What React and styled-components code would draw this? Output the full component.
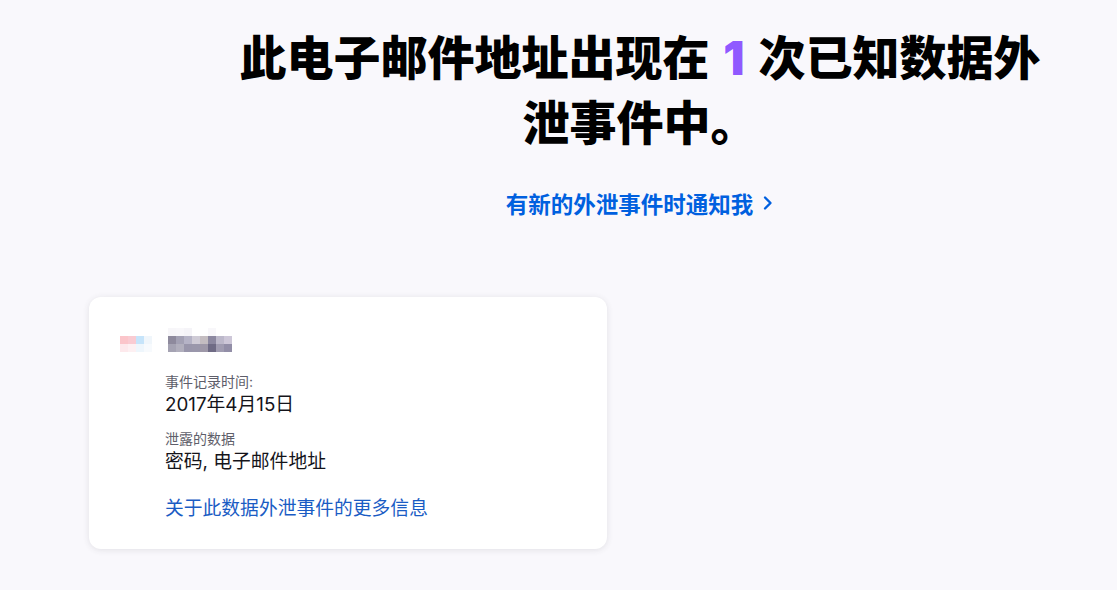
import React from 'react';
import styled, { createGlobalStyle } from 'styled-components';

const GlobalStyle = createGlobalStyle`
  html, body {
    margin: 0;
    padding: 0;
    background: #f9f8fc;
  }
  body {
    font-family: Inter, "Noto Sans CJK SC", "Noto Sans", sans-serif;
    color: #15141a;
  }
  * {
    box-sizing: border-box;
  }
`;

const Page = styled.main`
  min-height: 590px;
  padding: 24px 0 0 89px;
`;

const Hero = styled.section`
  width: 820px;
  margin-left: 141px;
  text-align: center;
`;

const Title = styled.h1`
  margin: 0;
  font-family: "Noto Sans CJK SC", sans-serif;
  font-size: 47px;
  font-weight: 900;
  line-height: 62px;
  color: #000;
`;

const Count = styled.span`
  color: #9059ff;
  margin: 0 3px;
  font-family: Inter, "Noto Sans CJK SC", sans-serif;
`;

const NotifyLink = styled.a`
  display: inline-flex;
  align-items: center;
  gap: 9px;
  margin-top: 37px;
  font-family: "Noto Sans CJK SC", sans-serif;
  font-size: 22.5px;
  font-weight: 700;
  line-height: 30px;
  color: #0060df;
  text-decoration: none;
  cursor: pointer;
`;

const Card = styled.article`
  width: 518px;
  margin-top: 79px;
  padding: 31px 28px 28px;
  background: #fff;
  border-radius: 12px;
  box-shadow: 0 1px 6px rgba(58, 57, 68, 0.12);
`;

const Header = styled.div`
  display: flex;
  align-items: flex-start;
  gap: 16px;
`;

const Pixels = styled.div`
  display: grid;
  grid-template-columns: repeat(${(p) => p.$cols}, 8px);
  grid-auto-rows: 8px;
  margin-left: ${(p) => p.$offset || 0}px;
`;

const Px = styled.span`
  background: ${(p) => p.$c};
`;

const Details = styled.dl`
  margin: 20px 0 0 48px;
`;

const Label = styled.dt`
  font-size: 14px;
  line-height: 20px;
  color: #5e5e6a;
  margin-top: ${(p) => p.$gap || 0}px;
`;

const Value = styled.dd`
  margin: 1px 0 0;
  font-size: 18.8px;
  line-height: 24px;
  color: #15141a;
`;

const MoreLink = styled.a`
  display: block;
  margin: 23px 0 0 48px;
  font-size: 18.8px;
  line-height: 24px;
  color: #1a5cc4;
  text-decoration: none;
  cursor: pointer;
`;

const Chevron = () => (
  <svg width="12" height="16" viewBox="0 0 12 16" fill="none">
    <path d="M3 2.5l5.5 5.5L3 13.5" stroke="#0060df" strokeWidth="2.4" strokeLinecap="round" strokeLinejoin="round" />
  </svg>
);

const logoColors = [
  '#ffffff', '#ffffff', '#ffffff', '#ffffff',
  '#fbc5ca', '#f9cbd2', '#c6e4fa', '#f0f6fb',
  '#fde9ec', '#fdf0f2', '#eef6fc', '#f7fafd',
];

const nameColors = [
  '#f7f6f9', '#f8f7fa', '#f5f4f8', '#ffffff', '#ffffff', '#f8f7fa', '#ffffff', '#ffffff',
  '#8e8a9d', '#a3a1b4', '#b5b3c6', '#cfcbd6', '#c4bdc1', '#8c88a0', '#bcb8ca', '#cdc7d8',
  '#a5a3b3', '#b1afbd', '#9996ab', '#9a97ab', '#9e98a8', '#6f6b85', '#a09cb1', '#928ea7',
];

const App = () => (
  <>
    <GlobalStyle />
    <Page>
      <Hero>
        <Title>
          此电子邮件地址出现在 <Count>1</Count> 次已知数据外泄事件中。
        </Title>
        <NotifyLink>
          有新的外泄事件时通知我
          <Chevron />
        </NotifyLink>
      </Hero>
      <Card>
        <Header>
          <Pixels $cols={4} $offset={3}>
            {logoColors.map((c, i) => (
              <Px key={i} $c={c} />
            ))}
          </Pixels>
          <Pixels $cols={8}>
            {nameColors.map((c, i) => (
              <Px key={i} $c={c} />
            ))}
          </Pixels>
        </Header>
        <Details>
          <Label>事件记录时间:</Label>
          <Value>2017年4月15日</Value>
          <Label $gap={12}>泄露的数据</Label>
          <Value>密码, 电子邮件地址</Value>
        </Details>
        <MoreLink>关于此数据外泄事件的更多信息</MoreLink>
      </Card>
    </Page>
  </>
);

export default App;
